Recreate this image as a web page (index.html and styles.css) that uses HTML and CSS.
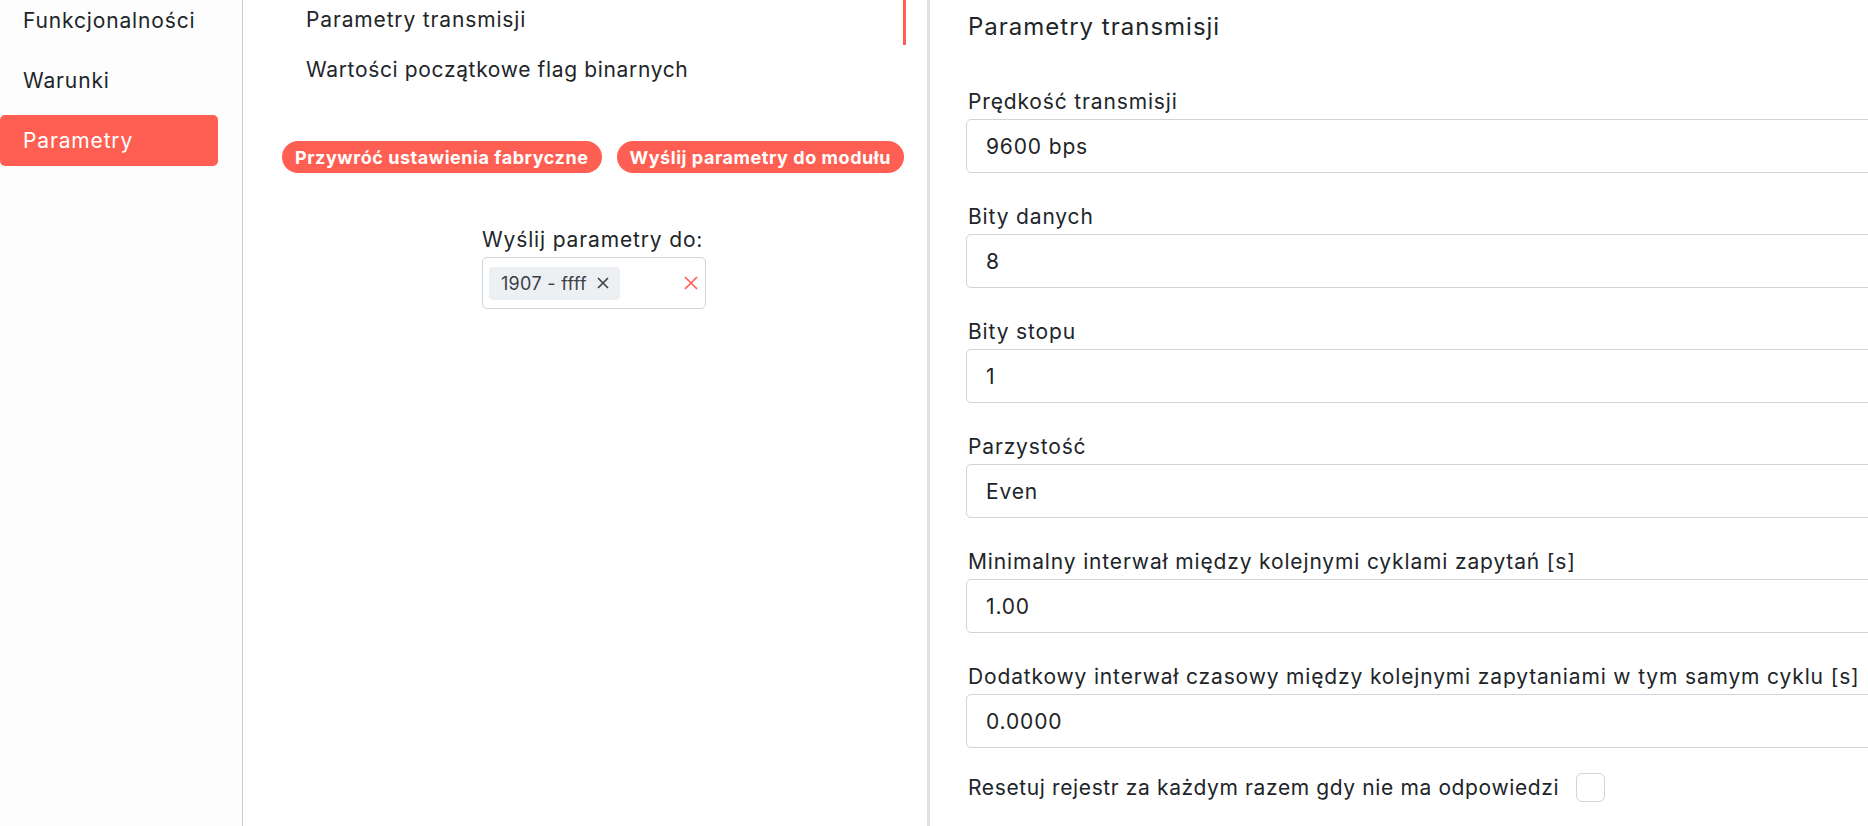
FILE: index.html
```html
<!DOCTYPE html>
<html lang="pl">
<head>
<meta charset="utf-8">
<title>Parametry</title>
<link rel="stylesheet" href="styles.css">
</head>
<body>
<div class="app">
  <aside class="sidebar">
    <ul class="side-list">
      <li class="side-item">Funkcjonalności</li>
      <li class="side-item">Warunki</li>
      <li class="side-item active">Parametry</li>
    </ul>
  </aside>

  <section class="middle">
    <nav class="sub-nav">
      <a class="sub-item active">Parametry transmisji</a>
      <a class="sub-item">Wartości początkowe flag binarnych</a>
    </nav>
    <div class="actions">
      <button class="pill">Przywróć ustawienia fabryczne</button>
      <button class="pill">Wyślij parametry do modułu</button>
    </div>
    <div class="send-to">
      <div class="send-label">Wyślij parametry do:</div>
      <div class="multiselect">
        <span class="chip">
          <span class="chip-text">1907 - ffff</span>
          <svg class="chip-x" viewBox="0 0 12 12" width="12" height="12"><path d="M1 1L11 11M11 1L1 11" stroke="#3a3f45" stroke-width="1.6" fill="none"/></svg>
        </span>
        <svg class="clear-x" viewBox="0 0 14 14" width="14" height="14"><path d="M1 1L13 13M13 1L1 13" stroke="#ff5f52" stroke-width="1.7" fill="none"/></svg>
      </div>
    </div>
  </section>

  <main class="content">
    <h2 class="title">Parametry transmisji</h2>
    <div class="field">
      <div class="label">Prędkość transmisji</div>
      <div class="input">9600 bps</div>
    </div>
    <div class="field">
      <div class="label">Bity danych</div>
      <div class="input">8</div>
    </div>
    <div class="field">
      <div class="label">Bity stopu</div>
      <div class="input">1</div>
    </div>
    <div class="field">
      <div class="label">Parzystość</div>
      <div class="input">Even</div>
    </div>
    <div class="field">
      <div class="label">Minimalny interwał między kolejnymi cyklami zapytań [s]</div>
      <div class="input">1.00</div>
    </div>
    <div class="field">
      <div class="label">Dodatkowy interwał czasowy między kolejnymi zapytaniami w tym samym cyklu [s]</div>
      <div class="input">0.0000</div>
    </div>
    <div class="check-row">
      <span class="check-label">Resetuj rejestr za każdym razem gdy nie ma odpowiedzi</span>
      <span class="checkbox"></span>
    </div>
  </main>
</div>
</body>
</html>
```

FILE: styles.css
```css
* { box-sizing: border-box; }

html, body {
  margin: 0;
  padding: 0;
  height: 826px;
  overflow: hidden;
  background: #ffffff;
}

body {
  font-family: Inter, "Open Sans", sans-serif;
  font-size: 21px;
  letter-spacing: 0.85px;
  color: #212529;
}

.app {
  display: flex;
  height: 826px;
}

/* left sidebar */
.sidebar {
  width: 243px;
  flex-shrink: 0;
  border-right: 1px solid #c8cdd3;
  background: #fdfdfd;
  padding-right: 24px;
}

.side-list {
  list-style: none;
  margin: -5px 0 0 0;
  padding: 0;
  display: flex;
  flex-direction: column;
  gap: 9px;
}

.side-item {
  height: 51px;
  line-height: 51px;
  padding-left: 23px;
  border-radius: 5px;
  white-space: nowrap;
}

.side-item.active {
  background: #ff5f52;
  color: #ffffff;
}

/* middle column */
.middle {
  width: 687px;
  flex-shrink: 0;
  padding: 0 21px 0 39px;
  border-right: 3px solid #dee2e6;
  display: flex;
  flex-direction: column;
}

.sub-nav {
  margin-top: -5px;
  display: flex;
  flex-direction: column;
}

.sub-item {
  height: 50px;
  line-height: 50px;
  padding-left: 24px;
  border-right: 3px solid transparent;
  white-space: nowrap;
}

.sub-item + .sub-item {
  letter-spacing: 0.65px;
}

.sub-item.active {
  border-right-color: #ff5f52;
}

.actions {
  margin-top: 46px;
  display: flex;
  gap: 15px;
}

.pill {
  height: 32px;
  padding: 0 13px;
  border: none;
  border-radius: 16px;
  background: #ff5f52;
  color: #ffffff;
  font-family: Inter, "Open Sans", sans-serif;
  font-weight: 700;
  font-size: 18px;
  letter-spacing: 0.55px;
  white-space: nowrap;
}

.send-to {
  margin-top: 52px;
  align-self: center;
  width: 224px;
}

.send-label {
  height: 30px;
  line-height: 30px;
  white-space: nowrap;
}

.multiselect {
  margin-top: 2px;
  height: 52px;
  border: 1px solid #ced4da;
  border-radius: 5px;
  padding: 0 7px 0 6px;
  display: flex;
  align-items: center;
  justify-content: space-between;
}

.chip {
  height: 33px;
  width: 131px;
  background: #edf0f3;
  border-radius: 4px;
  padding: 0 11px 0 12px;
  display: flex;
  align-items: center;
  justify-content: space-between;
  font-size: 18px;
  letter-spacing: 0.3px;
  color: #3a3f45;
  white-space: nowrap;
}

/* right content */
.content {
  width: 1100px;
  flex-shrink: 0;
  padding-left: 36px;
}

.title {
  margin: 13px 0 0 2px;
  height: 28px;
  line-height: 28px;
  font-size: 24px;
  font-weight: 400;
  letter-spacing: 1px;
}

.field {
  display: flex;
  flex-direction: column;
}

.title + .field { margin-top: 45px; }

.field + .field { margin-top: 28px; }

.label {
  height: 30px;
  line-height: 30px;
  padding-top: 1px;
  padding-left: 2px;
  white-space: nowrap;
}

.input {
  margin-top: 3px;
  height: 54px;
  border: 1px solid #ced4da;
  border-radius: 5px;
  padding-left: 19px;
  display: flex;
  align-items: center;
}

.check-row {
  margin-top: 24px;
  height: 30px;
  display: flex;
  align-items: center;
  padding-left: 2px;
}

.check-label {
  letter-spacing: 0.62px;
}

.checkbox {
  margin-left: 17px;
  width: 29px;
  height: 29px;
  border: 1px solid #ced4da;
  border-radius: 6px;
}
```
